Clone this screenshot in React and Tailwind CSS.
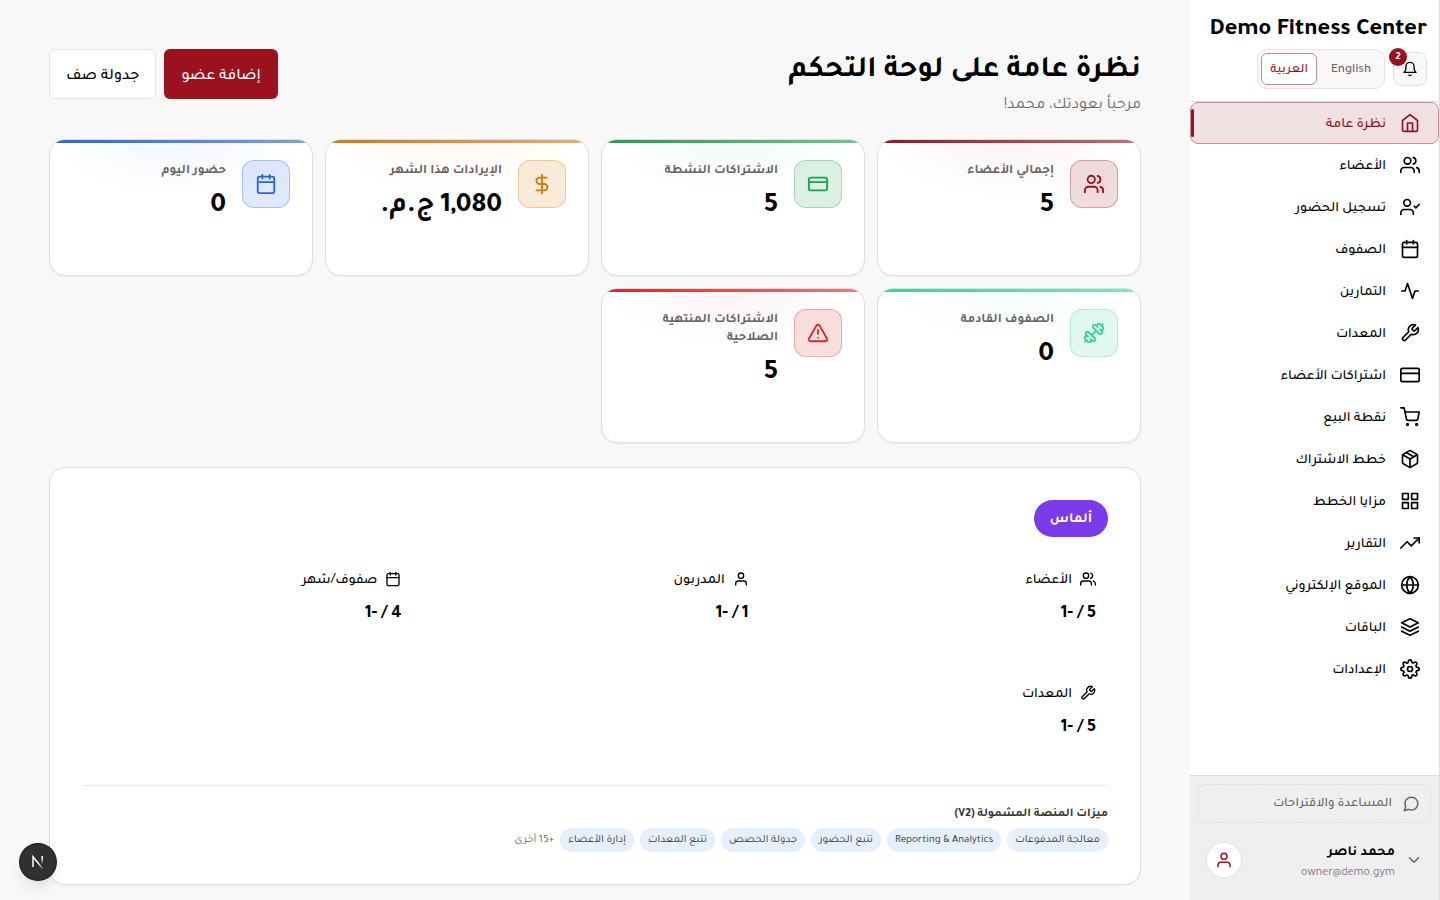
import React from 'react';
import { Calendar, CreditCard, DollarSign, Dumbbell, TriangleAlert, Users } from 'lucide-react';
import {
  FiActivity, FiBell, FiCalendar, FiChevronDown, FiCreditCard, FiGlobe, FiGrid, FiHome, FiLayers, FiMessageCircle,
  FiPackage, FiSettings, FiShoppingCart, FiTool, FiTrendingUp, FiUser, FiUserCheck, FiUsers,
} from 'react-icons/fi';

const NAV = [
  { label: 'نظرة عامة', icon: FiHome, active: true },
  { label: 'الأعضاء', icon: FiUsers },
  { label: 'تسجيل الحضور', icon: FiUserCheck },
  { label: 'الصفوف', icon: FiCalendar },
  { label: 'التمارين', icon: FiActivity },
  { label: 'المعدات', icon: FiTool },
  { label: 'اشتراكات الأعضاء', icon: FiCreditCard },
  { label: 'نقطة البيع', icon: FiShoppingCart },
  { label: 'خطط الاشتراك', icon: FiPackage },
  { label: 'مزايا الخطط', icon: FiGrid },
  { label: 'التقارير', icon: FiTrendingUp },
  { label: 'الموقع الإلكتروني', icon: FiGlobe },
  { label: 'الباقات', icon: FiLayers },
  { label: 'الإعدادات', icon: FiSettings },
];

const STATS = [
  { label: 'إجمالي الأعضاء', value: '5', icon: Users, bar: 'from-[#9b111e] to-[#9b111e]/60', glow: 'from-[#9b111e]/5', tile: 'bg-[#9b111e]/15 border-[#9b111e]/30 text-[#9b111e]' },
  { label: 'الاشتراكات النشطة', value: '5', icon: CreditCard, bar: 'from-[#16a34a] to-[#16a34a]/60', glow: 'from-[#16a34a]/5', tile: 'bg-[#16a34a]/15 border-[#16a34a]/30 text-[#16a34a]' },
  { label: 'الإيرادات هذا الشهر', value: '1,080 ج.م.', icon: DollarSign, bar: 'from-[#d97706] to-[#d97706]/60', glow: 'from-[#d97706]/5', tile: 'bg-[#d97706]/15 border-[#d97706]/30 text-[#d97706]' },
  { label: 'حضور اليوم', value: '0', icon: Calendar, bar: 'from-[#2563eb] to-[#2563eb]/60', glow: 'from-[#2563eb]/5', tile: 'bg-[#2563eb]/15 border-[#2563eb]/30 text-[#2563eb]' },
  { label: 'الصفوف القادمة', value: '0', icon: Dumbbell, bar: 'from-[#34d399] to-[#34d399]/60', glow: 'from-[#34d399]/5', tile: 'bg-[#34d399]/15 border-[#34d399]/30 text-[#34d399]' },
  { label: 'الاشتراكات المنتهية الصلاحية', value: '5', icon: TriangleAlert, bar: 'from-[#dc2626] to-[#dc2626]/60', glow: 'from-[#dc2626]/5', tile: 'bg-[#dc2626]/15 border-[#dc2626]/30 text-[#dc2626]' },
];

const USAGE = [
  { label: 'الأعضاء', value: '5 / -1', icon: FiUsers },
  { label: 'المدربون', value: '1 / -1', icon: FiUser },
  { label: 'صفوف/شهر', value: '4 / -1', icon: FiCalendar },
  { label: 'المعدات', value: '5 / -1', icon: FiTool },
];

const FEATURES = ['معالجة المدفوعات', 'Reporting & Analytics', 'تتبع الحضور', 'جدولة الحصص', 'تتبع المعدات', 'إدارة الأعضاء'];

function Sidebar() {
  return (
    <aside className="flex w-[250px] shrink-0 flex-col border-r border-[#dedede] bg-white">
      <div className="flex flex-col gap-[3px] border-b border-[#dedede] pt-[17px] pr-3 pb-3 pl-5">
        <div className="text-2xl leading-[29px] font-bold whitespace-nowrap">Demo Fitness Center</div>
        <div className="flex items-center gap-2">
          <button type="button" aria-label="الإشعارات" className="relative flex size-[34px] items-center justify-center rounded-lg border border-[#e2e2e2] bg-[#f8f8f8]">
            <FiBell size={16} />
            <span className="absolute -top-[5px] -left-[5px] flex size-[18px] items-center justify-center rounded-full bg-[#9b111e] pt-[3px] text-[11px] font-bold text-white">2</span>
          </button>
          <div className="flex h-10 items-center gap-1 rounded-[10px] border border-[#e2e2e2] bg-[#f8f8f8] p-[3px]">
            <button type="button" className="h-8 px-[10px] pt-1 text-[13px] font-medium text-[#666]">English</button>
            <button type="button" className="h-8 rounded-md border border-[#c98c93] bg-white px-2 pt-1 text-[13px] font-medium text-[#9b111e]">العربية</button>
          </div>
        </div>
      </div>

      <nav className="flex-1">
        {NAV.map((item) => (
          <a
            key={item.label}
            href="#"
            className={`relative flex h-[42px] items-center gap-[14px] rounded-lg border pr-[18px] text-sm font-medium ${item.active ? 'border-[#c98c93] bg-[#f2e1e3] text-[#9b111e]' : 'border-transparent'}`}
          >
            <item.icon size={20} />
            <span className="pt-1">{item.label}</span>
            {item.active && <span className="absolute top-[6px] bottom-[6px] left-0 w-[3px] rounded-sm bg-[#9b111e]" />}
          </a>
        ))}
      </nav>

      <div className="border-t border-[#dedede] bg-[#efefef] px-2 pt-2 pb-4">
        <a href="#" className="flex h-[39px] items-center gap-[10px] rounded-lg border border-dashed border-[#dcdcdc] px-[10px] text-[13px] font-medium text-[#666]">
          <FiMessageCircle size={18} />
          <span className="pt-[3px]">المساعدة والاقتراحات</span>
        </a>
        <button type="button" className="mt-[13px] flex w-full items-center gap-[10px] px-2 text-right">
          <FiChevronDown size={18} className="text-[#666]" />
          <span className="flex-1 pt-2">
            <span className="block text-sm leading-[18px] font-bold">محمد ناصر</span>
            <span className="block text-xs leading-[22px] text-[#777]">owner@demo.gym</span>
          </span>
          <span className="flex size-9 items-center justify-center rounded-full border border-[#e2e2e2] bg-white text-[#9b111e]">
            <FiUser size={18} />
          </span>
        </button>
      </div>
    </aside>
  );
}

function StatCard({ stat }) {
  return (
    <div className="relative flex gap-4 overflow-hidden rounded-2xl border border-[#dfdfdf] bg-white px-[22px] pt-5 pb-[49px] shadow-xs">
      <div className={`absolute inset-x-0 top-0 h-[60px] bg-radial-[ellipse_at_top] to-transparent to-70% ${stat.glow}`} />
      <div className={`absolute inset-x-0 top-0 h-[3px] bg-linear-to-r ${stat.bar}`} />
      <div className={`relative flex size-12 shrink-0 items-center justify-center rounded-xl border ${stat.tile}`}>
        <stat.icon size={22} />
      </div>
      <div className="relative flex-1 pt-[3px]">
        <p className="text-[13px] leading-[18px] font-bold text-[#666]">{stat.label}</p>
        <p className="mt-[7px] text-[28px] leading-[38px] font-bold">{stat.value}</p>
      </div>
    </div>
  );
}

function PlanPanel() {
  return (
    <section className="mt-6 rounded-2xl border border-[#dfdfdf] bg-white px-8 py-8 shadow-xs">
      <span className="inline-flex h-[37px] items-center rounded-full bg-[#7c3aed] px-4 pt-[3px] text-sm font-bold text-white">ألماس</span>
      <div className="mt-5 grid grid-cols-3 gap-4">
        {USAGE.map((item) => (
          <div key={item.label} className="h-[98px] px-3 pt-3">
            <div className="flex h-5 items-center gap-2 text-sm font-medium">
              <item.icon size={16} />
              <span className="pt-1">{item.label}</span>
            </div>
            <p className="mt-[13px] text-lg leading-6 font-bold">{item.value}</p>
          </div>
        ))}
      </div>
      <div className="mt-4 border-t border-[#e8e8e8] pt-[18px]">
        <p className="text-xs leading-5 font-bold text-[#333]">ميزات المنصة المشمولة (V2)</p>
        <div className="mt-1 flex flex-wrap items-center gap-[6px] text-[11px] text-[#333]">
          {FEATURES.map((name) => (
            <span key={name} className="flex h-6 items-center rounded-full bg-[#e6efff] px-2 pt-[3px]">{name}</span>
          ))}
          <span className="pt-[3px] text-[#666]">+15 أخرى</span>
        </div>
      </div>
    </section>
  );
}

export default function App() {
  return (
    <div dir="rtl" className="flex min-h-screen bg-[#f8f8f8] font-[Tajawal,sans-serif] text-black">
      <Sidebar />
      <main className="min-w-0 flex-1 px-[49px] pt-12">
        <header className="flex items-start justify-between">
          <div>
            <h1 className="pt-1 text-3xl leading-10 font-bold">نظرة عامة على لوحة التحكم</h1>
            <p className="mt-[2px] text-base leading-6 text-[#666]">مرحباً بعودتك، محمد!</p>
          </div>
          <div className="flex gap-2 pt-px">
            <button type="button" className="h-[50px] rounded-md bg-[#9b111e] px-[17px] pt-[5px] text-base font-medium text-white">إضافة عضو</button>
            <button type="button" className="h-[50px] rounded-md border border-[#e2e2e2] bg-white px-4 pt-[5px] text-base font-medium">جدولة صف</button>
          </div>
        </header>
        <div className="mt-[21px] grid grid-cols-4 gap-3">
          {STATS.map((stat) => <StatCard key={stat.label} stat={stat} />)}
        </div>
        <PlanPanel />
      </main>
      <button type="button" aria-label="Next.js" className="fixed bottom-5 left-5 flex size-9 items-center justify-center rounded-full bg-[#303030] text-white shadow-lg ring-1 ring-[#171717]">
        <svg width="14" height="14" viewBox="0 0 14 14" fill="none" strokeWidth="1.5">
          <defs>
            <linearGradient id="stem" x1="0" y1="0" x2="0" y2="9" gradientUnits="userSpaceOnUse">
              <stop offset="0.4" stopColor="#fff" />
              <stop offset="1" stopColor="#fff" stopOpacity="0" />
            </linearGradient>
            <linearGradient id="slant" x1="7" y1="8" x2="12" y2="14" gradientUnits="userSpaceOnUse">
              <stop stopColor="#fff" />
              <stop offset="1" stopColor="#fff" stopOpacity="0.2" />
            </linearGradient>
          </defs>
          <path d="M2 12V1.8L12 14" stroke="url(#slant)" />
          <path d="M11.2 1V9" stroke="url(#stem)" />
        </svg>
      </button>
    </div>
  );
}
